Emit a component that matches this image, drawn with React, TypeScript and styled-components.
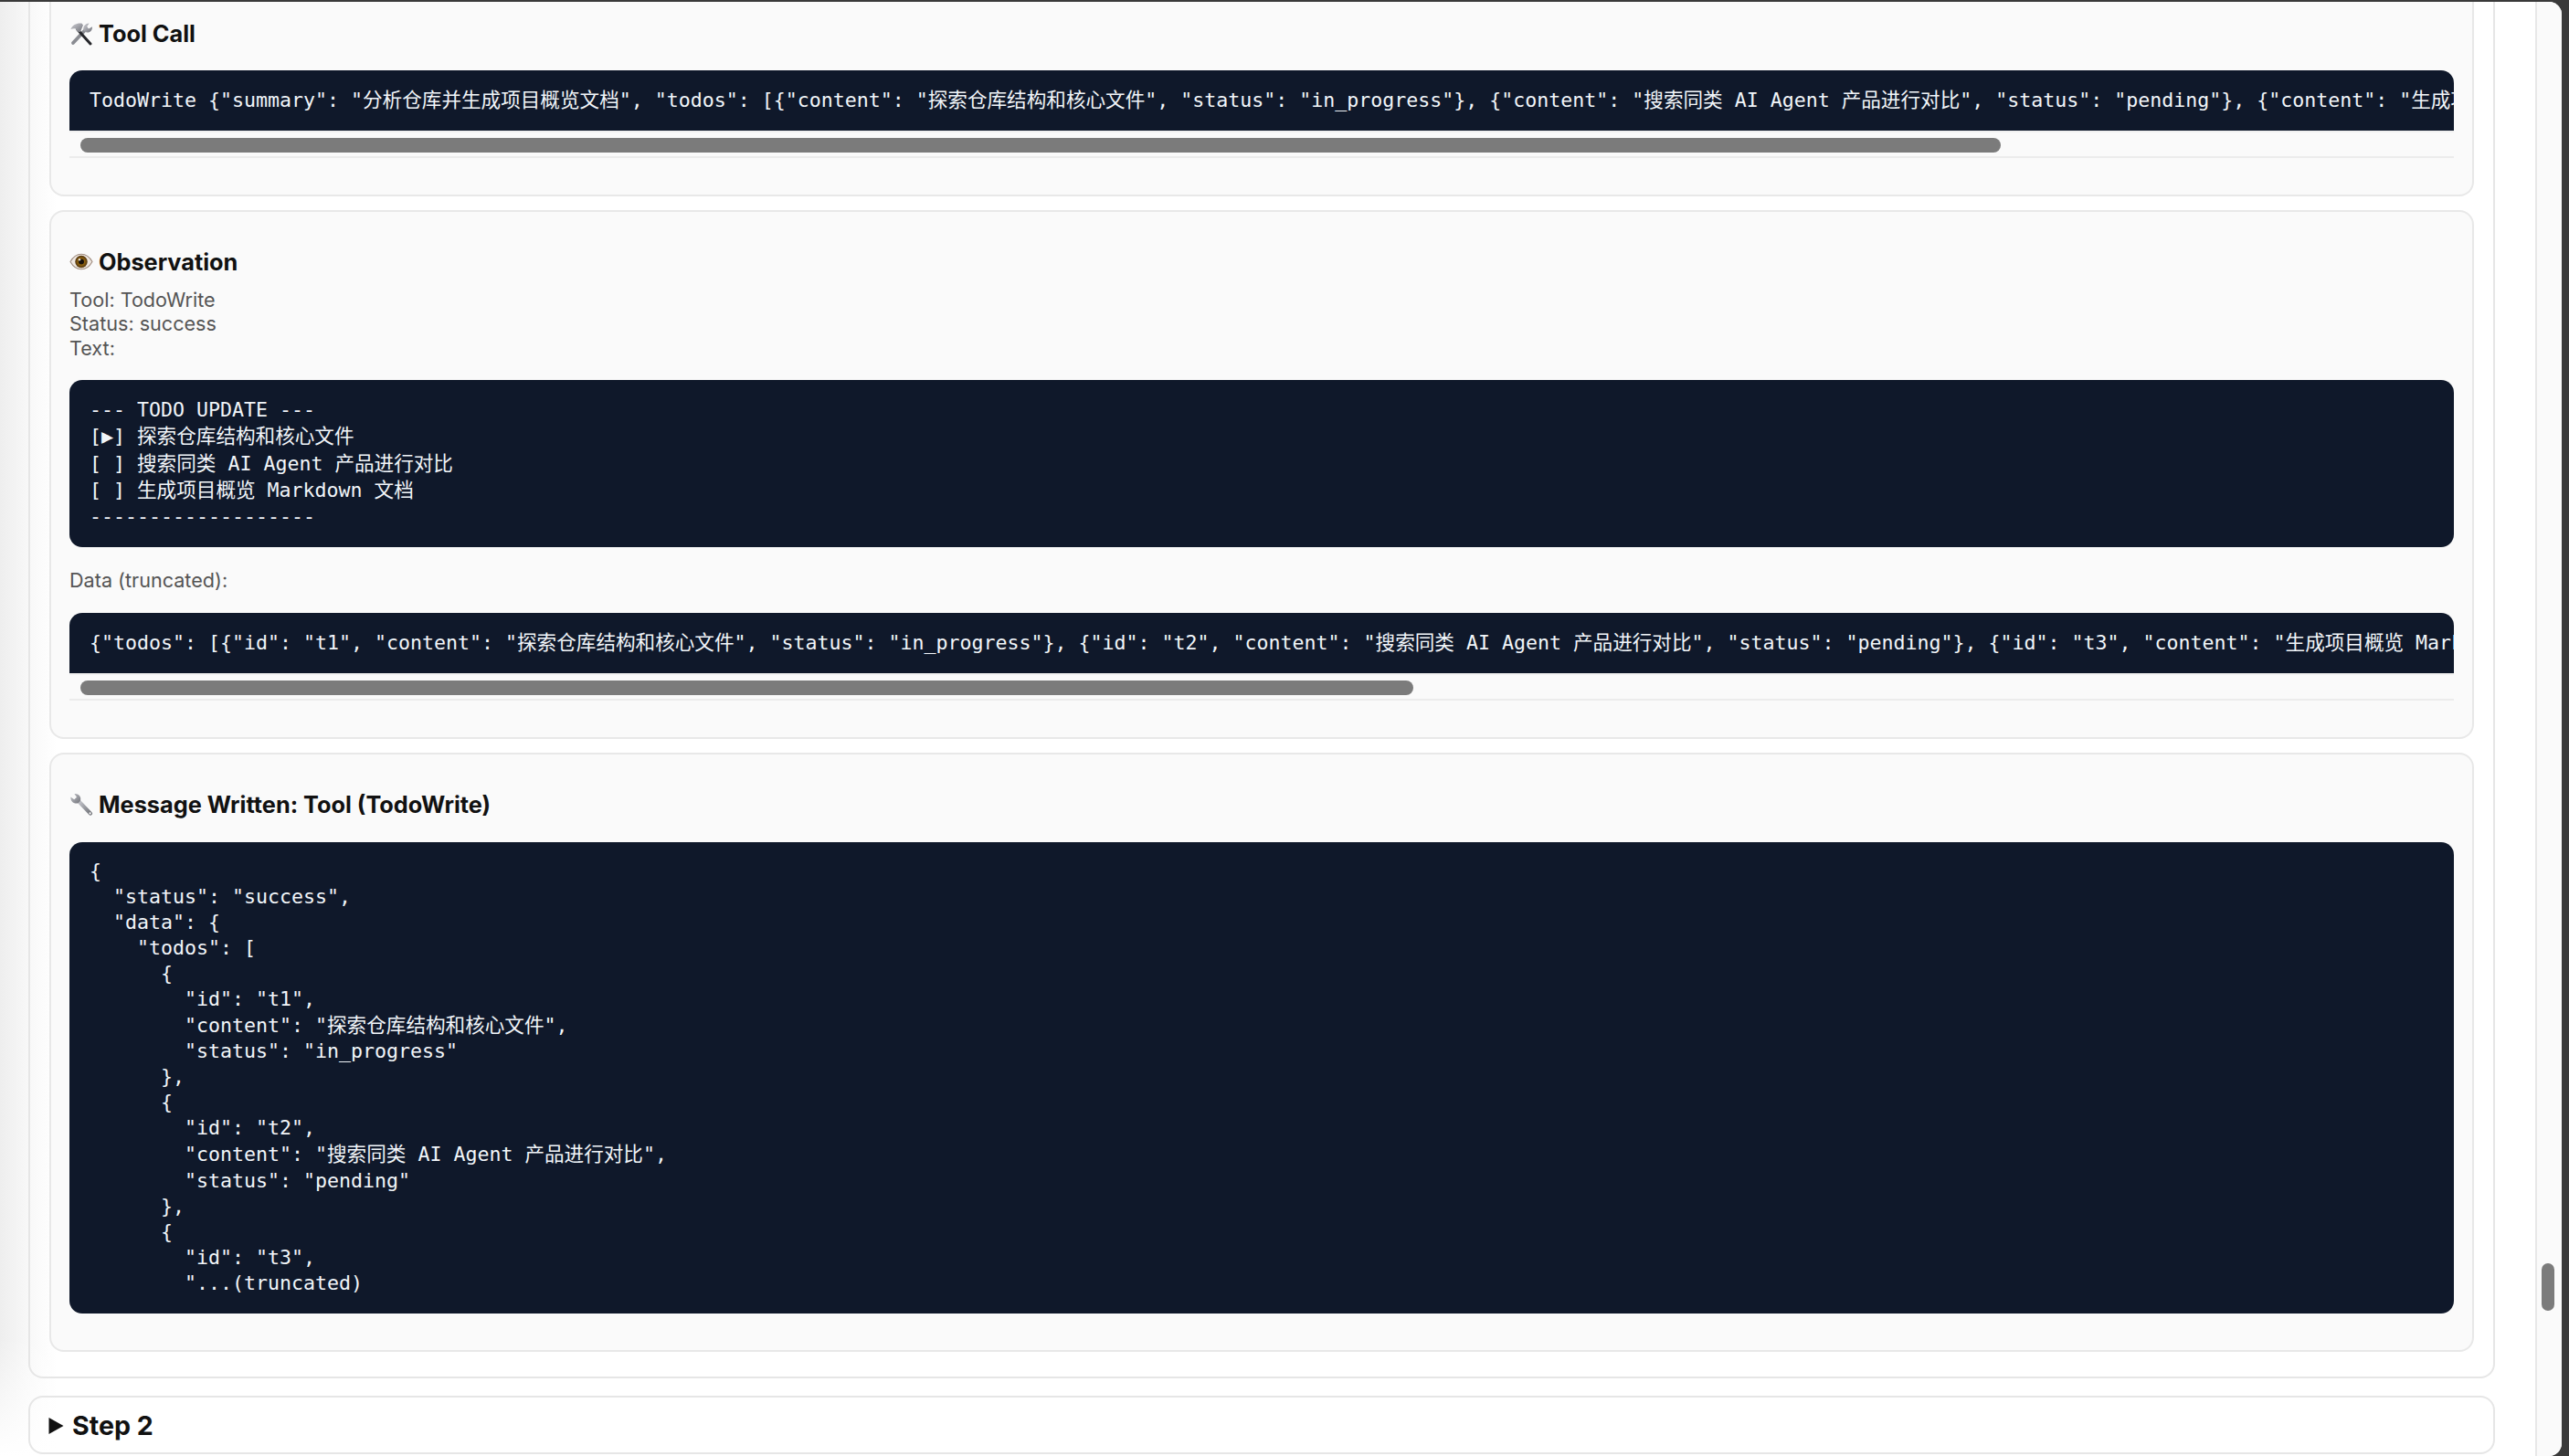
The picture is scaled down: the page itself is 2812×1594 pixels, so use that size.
import React from "react";
import styled, { createGlobalStyle } from "styled-components";

const Global = createGlobalStyle`
  html, body { margin: 0; padding: 0; background: #3a3a3a; }
  * { box-sizing: border-box; }
`;

const Frame = styled.div`
  height: 1594px;
  padding: 2px 8px 0 0;
  background: #3a3a3a;
  overflow: hidden;
`;

const Win = styled.div`
  display: flex;
  height: 1592px;
  border-radius: 0 14px 14px 0;
  overflow: hidden;
  background:
    linear-gradient(to top, #fff 0, rgba(255, 255, 255, 0) 130px),
    linear-gradient(90deg, #eeeeee 0, #f8f8f8 31px, #ffffff 62px);
`;

const Main = styled.main`
  flex: 1;
  min-width: 0;
  display: flex;
  flex-direction: column;
  gap: 19px;
  padding: 0 44px 0 31px;
`;

const Rail = styled.aside`
  width: 29px;
  flex: none;
  background: #fafafa;
  border-left: 2px solid #e8e8e8;
  padding: 1381px 0 0 5px;
`;

const RailThumb = styled.div`
  width: 14px;
  height: 52px;
  border-radius: 7px;
  background: #7b7b7b;
`;

const Panel = styled.section`
  display: flex;
  flex-direction: column;
  gap: 15px;
  padding: 0 21px 27px;
  border: 2px solid #e6e6e6;
  border-top: none;
  border-radius: 0 0 16px 16px;
`;

const Card = styled.article<{ $first?: boolean }>`
  background: #fafafa;
  border: 2px solid #e8e8e8;
  border-top: ${(p) => (p.$first ? "none" : "2px solid #e8e8e8")};
  border-radius: ${(p) => (p.$first ? "0 0 16px 16px" : "16px")};
  padding: ${(p) => (p.$first ? "20px" : "40px")} 20px 40px;
`;

const Heading = styled.h3`
  display: flex;
  align-items: center;
  gap: 6px;
  margin: 0 0 25px;
  height: 30px;
  font: 700 25.3px/30px Inter, "Noto Sans", sans-serif;
  color: #111;
`;

const HeadingTight = styled(Heading)`
  margin-bottom: 13px;
`;

const HeadingWide = styled(Heading)`
  margin-bottom: 25.5px;
`;

const Meta = styled.div`
  font: 400 21.6px/26.4px Inter, "Noto Sans", sans-serif;
  color: #555;
`;

const Label = styled(Meta)`
  margin: 23px 0;
`;

const SpacedMeta = styled(Meta)`
  margin-bottom: 22px;
`;

const Code = styled.pre<{ $open?: boolean }>`
  margin: 0;
  padding: 19px 22px;
  background: #0f182a;
  color: #f1f5f9;
  border-radius: ${(p) => (p.$open ? "14px 14px 0 0" : "14px")};
  overflow: hidden;
  white-space: pre;
  font: 400 21.6px/28px "DejaVu Sans Mono", "Noto Sans CJK SC", monospace;
`;

const JsonCode = styled(Code)`
  padding: 18px 22px 19px;
`;

const Line = styled.div<{ $tall?: boolean }>`
  height: ${(p) => (p.$tall ? "29.5px" : "28px")};
  line-height: ${(p) => (p.$tall ? "29.5px" : "28px")};
`;

const Track = styled.div`
  height: 30px;
  padding: 6px 12px;
  border-top: 2px solid #f1f1f1;
  border-bottom: 2px solid #ececec;
`;

const Thumb = styled.div`
  height: 16px;
  border-radius: 8px;
  background: #7b7b7b;
`;

const Step = styled.section`
  display: flex;
  align-items: center;
  gap: 9px;
  height: 64px;
  padding: 2px 0 0 20px;
  border: 2px solid #e6e6e6;
  border-radius: 16px;
  font: 700 28.6px/32px Inter, "Noto Sans", sans-serif;
  color: #111;
`;

const ToolsIcon = () => (
  <svg width="26" height="26" viewBox="0 0 26 26">
    <defs>
      <linearGradient id="m1" x1="0" y1="0" x2="1" y2="1">
        <stop offset="0" stopColor="#cfcfd5" />
        <stop offset="1" stopColor="#6f7178" />
      </linearGradient>
    </defs>
    <path d="M4 23 L18 8" stroke="#8a8c92" strokeWidth="3.8" strokeLinecap="round" />
    <path d="M15.8 9.8 C14 6 16.8 1.4 21.6 1.4 L19.2 5 L21 7.4 L25 5.2 C25.4 9.8 21.6 12.8 17.8 11 Z" fill="url(#m1)" />
    <path d="M9 8.5 L23 24" stroke="#26272b" strokeWidth="3" strokeLinecap="round" />
    <path d="M1.4 8 C3.6 3 8 1 13.4 1.6 L15 3.6 L11.8 11.2 L8.6 10.6 L6.8 7.4 C5 7 3 7.2 1.4 8 Z" fill="url(#m1)" />
  </svg>
);

const EyeIcon = () => (
  <svg width="26" height="26" viewBox="0 0 26 26">
    <defs>
      <radialGradient id="ir" cx="0.5" cy="0.5" r="0.5">
        <stop offset="0.35" stopColor="#a8740f" />
        <stop offset="1" stopColor="#4f3410" />
      </radialGradient>
    </defs>
    <path d="M1 12.5 C4.6 6 8.8 4.2 13 4.2 C17.2 4.2 21.4 6 25 12.5 C21.4 19 17.2 20.8 13 20.8 C8.8 20.8 4.6 19 1 12.5 Z" fill="#efe8e2" stroke="#a08d80" strokeWidth="1.1" />
    <circle cx="13" cy="12.5" r="6.7" fill="url(#ir)" />
    <circle cx="13" cy="12.5" r="3" fill="#17100a" />
    <circle cx="11" cy="10.2" r="1.2" fill="#fff" opacity="0.85" />
  </svg>
);

const WrenchIcon = () => (
  <svg width="26" height="26" viewBox="0 0 26 26">
    <defs>
      <linearGradient id="m2" x1="0" y1="0" x2="1" y2="1">
        <stop offset="0" stopColor="#c4c5cb" />
        <stop offset="1" stopColor="#717379" />
      </linearGradient>
    </defs>
    <path d="M10.5 9.5 L23 22.6" stroke="url(#m2)" strokeWidth="4.2" strokeLinecap="round" />
    <path d="M1.4 4.4 L5.2 7.2 L8 4.8 L5.4 1 C10 0.2 13.6 4.4 11.8 9 L9.6 11.2 C5 12.6 0.8 9 1.4 4.4 Z" fill="url(#m2)" />
    <circle cx="22.6" cy="22.4" r="1.1" fill="#fff" />
  </svg>
);

const Arrow = () => (
  <svg width="17" height="20" viewBox="0 0 17 20">
    <path d="M0.5 1 L16.5 10 L0.5 19 Z" fill="#111" />
  </svg>
);

const todoLines: [string, boolean][] = [
  ["--- TODO UPDATE ---", false],
  ["[▶] 探索仓库结构和核心文件", true],
  ["[ ] 搜索同类 AI Agent 产品进行对比", true],
  ["[ ] 生成项目概览 Markdown 文档", true],
  ["-------------------", false],
];

const jsonLines: [string, boolean][] = [
  ["{", false],
  ['  "status": "success",', false],
  ['  "data": {', false],
  ['    "todos": [', false],
  ["      {", false],
  ['        "id": "t1",', false],
  ['        "content": "探索仓库结构和核心文件",', true],
  ['        "status": "in_progress"', false],
  ["      },", false],
  ["      {", false],
  ['        "id": "t2",', false],
  ['        "content": "搜索同类 AI Agent 产品进行对比",', true],
  ['        "status": "pending"', false],
  ["      },", false],
  ["      {", false],
  ['        "id": "t3",', false],
  ['        "...(truncated)', false],
];

const callText =
  'TodoWrite {"summary": "分析仓库并生成项目概览文档", "todos": [{"content": "探索仓库结构和核心文件", "status": "in_progress"}, {"content": "搜索同类 AI Agent 产品进行对比", "status": "pending"}, {"content": "生成项目概览 Markdown 文档", "status": "pending"}]}';
const dataText =
  '{"todos": [{"id": "t1", "content": "探索仓库结构和核心文件", "status": "in_progress"}, {"id": "t2", "content": "搜索同类 AI Agent 产品进行对比", "status": "pending"}, {"id": "t3", "content": "生成项目概览 Markdown 文档", "status": "pending"}]}';

const renderLines = (lines: [string, boolean][]) =>
  lines.map(([text, tall], i) => (
    <Line key={i} $tall={tall}>
      {text}
    </Line>
  ));

export default function App() {
  return (
    <Frame>
      <Global />
      <Win>
        <Main>
          <Panel>
            <Card $first>
              <Heading>
                <ToolsIcon />
                Tool Call
              </Heading>
              <Code $open>{callText}</Code>
              <Track>
                <Thumb style={{ width: 2102 }} />
              </Track>
            </Card>
            <Card>
              <HeadingTight>
                <EyeIcon />
                Observation
              </HeadingTight>
              <SpacedMeta>
                Tool: TodoWrite
                <br />
                Status: success
                <br />
                Text:
              </SpacedMeta>
              <Code>{renderLines(todoLines)}</Code>
              <Label>Data (truncated):</Label>
              <Code $open>{dataText}</Code>
              <Track>
                <Thumb style={{ width: 1459 }} />
              </Track>
            </Card>
            <Card>
              <HeadingWide>
                <WrenchIcon />
                Message Written: Tool (TodoWrite)
              </HeadingWide>
              <JsonCode>{renderLines(jsonLines)}</JsonCode>
            </Card>
          </Panel>
          <Step>
            <Arrow />
            Step 2
          </Step>
        </Main>
        <Rail>
          <RailThumb />
        </Rail>
      </Win>
    </Frame>
  );
}
